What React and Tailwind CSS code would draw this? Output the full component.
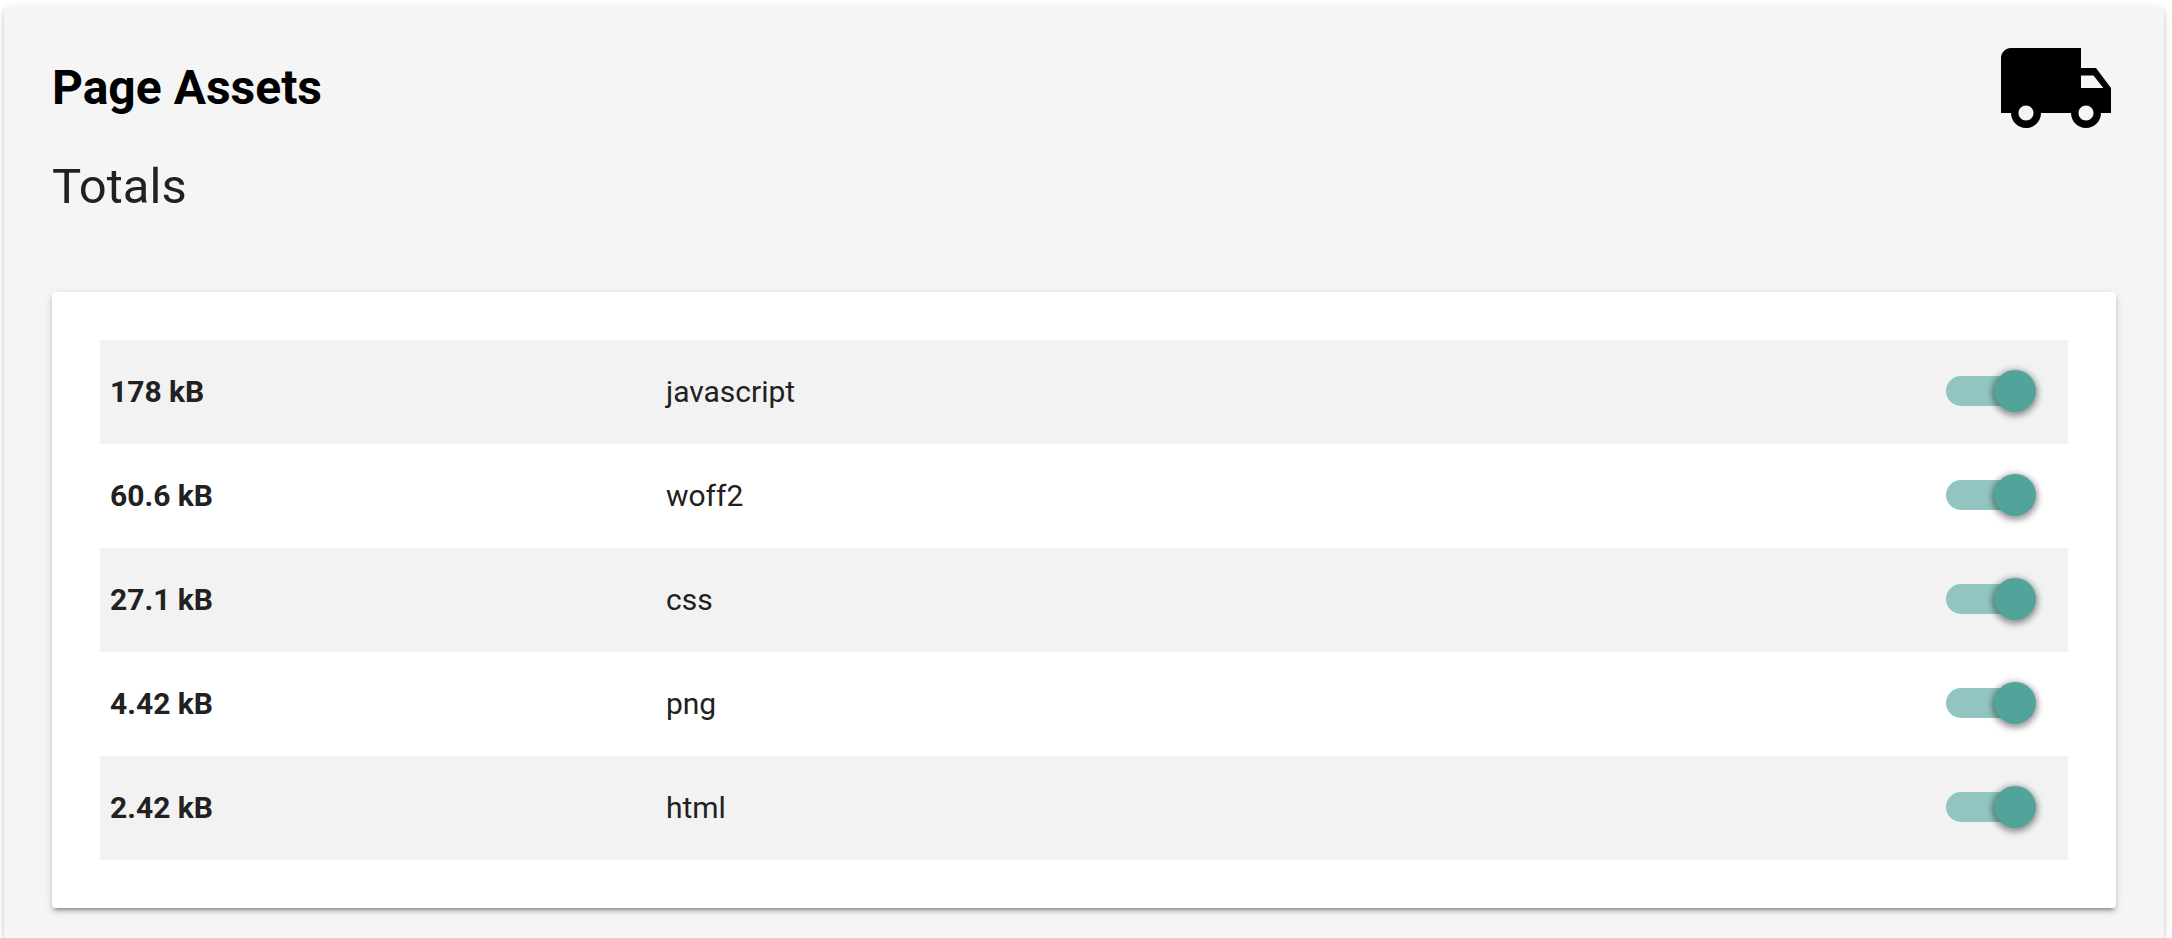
const assets = [
  { size: "178 kB", type: "javascript" },
  { size: "60.6 kB", type: "woff2" },
  { size: "27.1 kB", type: "css" },
  { size: "4.42 kB", type: "png" },
  { size: "2.42 kB", type: "html" },
];

function TruckIcon() {
  return (
    <svg viewBox="0 0 24 24" fill="currentColor" aria-hidden="true" className="-my-7 size-[120px] shrink-0 text-black">
      <path d="M20 8h-3V4H3c-1.1 0-2 .9-2 2v11h2c0 1.66 1.34 3 3 3s3-1.34 3-3h6c0 1.66 1.34 3 3 3s3-1.34 3-3h2v-5l-3-4zM6 18.5c-.83 0-1.5-.67-1.5-1.5s.67-1.5 1.5-1.5 1.5.67 1.5 1.5-.67 1.5-1.5 1.5zm13.5-9l1.96 2.5H17V9.5h2.5zm-1.5 9c-.83 0-1.5-.67-1.5-1.5s.67-1.5 1.5-1.5 1.5.67 1.5 1.5-.67 1.5-1.5 1.5z" />
    </svg>
  );
}

function Switch({ label }) {
  return (
    <input
      type="checkbox"
      role="switch"
      aria-label={label}
      defaultChecked
      className="relative mx-8 mb-0.5 block h-[30px] w-20 cursor-pointer appearance-none rounded-full bg-[#818181] before:absolute before:-top-1.5 before:-left-2.5 before:size-[42px] before:rounded-full before:bg-[#f1f1f1] before:shadow-[0_2px_6px_2px_rgba(0,0,0,0.4)] checked:bg-[#92c5c1] checked:before:left-12 checked:before:bg-[#52a39a]"
    />
  );
}

export default function App() {
  return (
    <div className="flex min-h-screen flex-col bg-white pt-[7px] pr-2 pl-1 font-[Roboto,sans-serif] text-[#212121]">
      <main className="flex-1 rounded-t-[4px] bg-[#f5f5f5] px-12 pt-[49px] pb-[30px] shadow-[0_4px_4px_0_rgba(0,0,0,0.14),0_2px_10px_0_rgba(0,0,0,0.12),0_6px_2px_-4px_rgba(0,0,0,0.2)]">
        <header className="flex items-center justify-between">
          <h1 className="text-5xl leading-[64px] font-bold text-black">Page Assets</h1>
          <TruckIcon />
        </header>
        <h2 className="mt-10 text-[49px] leading-[54px]">Totals</h2>
        <section className="mt-[78px] rounded-[4px] bg-white p-12 shadow-[0_4px_4px_0_rgba(0,0,0,0.14),0_2px_10px_0_rgba(0,0,0,0.12),0_6px_2px_-4px_rgba(0,0,0,0.2)]">
          <table className="w-full table-fixed text-left text-[30px] leading-[44px]">
            <colgroup>
              <col className="w-[28.25%]" />
              <col />
              <col className="w-[164px]" />
            </colgroup>
            <tbody>
              {assets.map(({ size, type }) => (
                <tr key={type} className="h-[104px] odd:bg-[#f2f2f2]">
                  <td className="px-2.5 font-bold">{size}</td>
                  <td className="px-2.5">{type}</td>
                  <td className="px-2.5">
                    <Switch label={type} />
                  </td>
                </tr>
              ))}
            </tbody>
          </table>
        </section>
      </main>
    </div>
  );
}
